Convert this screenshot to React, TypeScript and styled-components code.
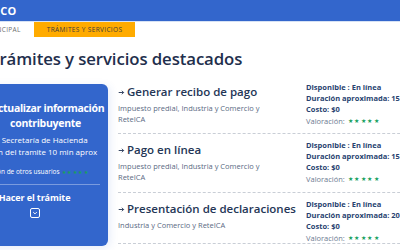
import React from "react";
import styled, { createGlobalStyle } from "styled-components";

const Global = createGlobalStyle`
  html, body { margin: 0; padding: 0; background: #fff; overflow: hidden; }
  body { font-family: "Open Sans", "Noto Sans", sans-serif; width: 400px; height: 250px; }
`;

const Page = styled.div`
  margin-left: -60px;
  width: 520px;
`;

const Header = styled.header`
  height: 21px;
  background: #3366cc;
  border-bottom: 1px solid #d6e2f5;
  display: flex;
  align-items: center;
  padding-left: 32px;
`;

const Logo = styled.span`
  color: #fff;
  font-weight: 700;
  font-size: 11px;
  letter-spacing: 0.3px;
`;

const Nav = styled.nav`
  display: flex;
  height: 15px;
  margin-left: 5px;
`;

const NavItem = styled.div<{ $active?: boolean }>`
  display: flex;
  align-items: center;
  padding: 0 13px;
  font-size: 6.5px;
  letter-spacing: 0.35px;
  color: ${(p) => (p.$active ? "#3b3b3b" : "#6f6f6f")};
  background: ${(p) => (p.$active ? "#ffab00" : "transparent")};
  white-space: nowrap;
`;

const Main = styled.main`
  padding-left: 20px;
`;

const Heading = styled.h1`
  margin: 9px 0 0 30px;
  font-size: 16.8px;
  font-weight: 600;
  letter-spacing: -0.1px;
  color: #1f2f4d;
  line-height: 26px;
  white-space: nowrap;
`;

const Content = styled.div`
  display: flex;
  gap: 10px;
  margin-top: 12px;
`;

const Card = styled.section`
  width: 148px;
  height: 162px;
  flex: none;
  box-sizing: border-box;
  background: #3366cc;
  border-radius: 6px;
  padding: 17px 8px 0 9px;
  color: #fff;
  box-shadow: 2px 2px 8px rgba(51, 102, 204, 0.12);
`;

const CardTitle = styled.div`
  text-align: center;
  padding-left: 22px;
  font-weight: 700;
  font-size: 10.5px;
  letter-spacing: -0.3px;
  line-height: 15px;
  white-space: nowrap;
`;

const CardText = styled.div<{ $gap?: number; $small?: boolean }>`
  margin-top: ${(p) => p.$gap ?? 0}px;
  font-size: ${(p) => (p.$small ? 6.5 : 8)}px;
  padding-left: ${(p) => (p.$small ? 4 : 0)}px;
  line-height: 12px;
  white-space: nowrap;
  display: flex;
  align-items: center;
  gap: 2px;
`;

const CardDivider = styled.hr`
  margin: 6px 0 0;
  border: none;
  border-top: 1px solid rgba(255, 255, 255, 0.35);
`;

const CardAction = styled.div`
  margin-top: 5px;
  text-align: center;
  font-weight: 700;
  font-size: 9px;
  letter-spacing: -0.1px;
  line-height: 16px;
`;

const ChevronBox = styled.div`
  margin: 2px auto 0;
  width: 10px;
  height: 10px;
  border: 1px solid #fff;
  border-radius: 2px;
  box-sizing: border-box;
  display: flex;
  align-items: center;
  justify-content: center;
`;

const List = styled.div`
  flex: 1;
  display: flex;
  flex-direction: column;
`;

const Item = styled.div<{ $h: number }>`
  display: flex;
  height: ${(p) => p.$h}px;
  box-sizing: border-box;
  padding-top: 8px;
  border-bottom: 1px dashed #c9ced6;
  &:first-child { padding-top: 0; }
`;

const ItemMain = styled.div`
  width: 188px;
  flex: none;
`;

const ItemTitle = styled.div`
  display: flex;
  align-items: center;
  gap: 2px;
  font-size: 11.5px;
  font-weight: 600;
  color: #243656;
  line-height: 16px;
  white-space: nowrap;
`;

const ItemDesc = styled.div`
  margin-top: 3px;
  font-size: 7.5px;
  line-height: 11px;
  color: #5a6a83;
  width: 150px;
`;

const ItemMeta = styled.div`
  margin-top: -2px;
  font-size: 7.5px;
  line-height: 11px;
  font-weight: 700;
  color: #27426f;
  white-space: nowrap;
`;

const Rating = styled.div`
  margin-top: 1px;
  font-weight: 400;
  color: #6d7b92;
  display: flex;
  align-items: center;
  gap: 3px;
`;

const Stars = styled.span<{ $size?: number }>`
  color: #17a05d;
  font-size: ${(p) => p.$size ?? 6}px;
  letter-spacing: 1.5px;
`;

const Arrow = () => (
  <svg width="7" height="7" viewBox="0 0 10 10">
    <path d="M1 5h7M5.5 2.5 8 5 5.5 7.5" fill="none" stroke="#243656" strokeWidth="1.3" />
  </svg>
);

const items = [
  { t: "Generar recibo de pago", d: "Impuesto predial, Industria y Comercio y ReteICA", dur: "15 min", h: 50 },
  { t: "Pago en línea", d: "Impuesto predial, Industria y Comercio y ReteICA", dur: "15 min", h: 59 },
  { t: "Presentación de declaraciones", d: "Industria y Comercio y ReteICA", dur: "20 min", h: 51 },
];

export default function App() {
  return (
    <>
      <Global />
      <Page>
        <Header>
          <Logo>GOV.CO</Logo>
        </Header>
        <Nav>
          <NavItem>PÁGINA PRINCIPAL</NavItem>
          <NavItem $active>TRÁMITES Y SERVICIOS</NavItem>
        </Nav>
        <Main>
          <Heading>Trámites y servicios destacados</Heading>
          <Content>
            <Card>
              <CardTitle>
                Actualizar información
                <br />
                contribuyente
              </CardTitle>
              <CardText $gap={3}>Entidad: Secretaría de Hacienda</CardText>
              <CardText>Duración del tramite 10 min aprox</CardText>
              <CardText $gap={8} $small>
                Valoración de otros usuarios <Stars $size={5}>★★★★★</Stars>
              </CardText>
              <CardDivider />
              <CardAction>Hacer el trámite</CardAction>
              <ChevronBox>
                <svg width="6" height="6" viewBox="0 0 10 10">
                  <path d="M2 3.5 5 6.5 8 3.5" fill="none" stroke="#fff" strokeWidth="1.6" />
                </svg>
              </ChevronBox>
            </Card>
            <List>
              {items.map((it) => (
                <Item key={it.t} $h={it.h}>
                  <ItemMain>
                    <ItemTitle>
                      <Arrow />
                      {it.t}
                    </ItemTitle>
                    <ItemDesc>{it.d}</ItemDesc>
                  </ItemMain>
                  <ItemMeta>
                    <div>Disponible : En línea</div>
                    <div>Duración aproximada: {it.dur}</div>
                    <div>Costo: $0</div>
                    <Rating>
                      Valoración: <Stars>★★★★★</Stars>
                    </Rating>
                  </ItemMeta>
                </Item>
              ))}
            </List>
          </Content>
        </Main>
      </Page>
    </>
  );
}
